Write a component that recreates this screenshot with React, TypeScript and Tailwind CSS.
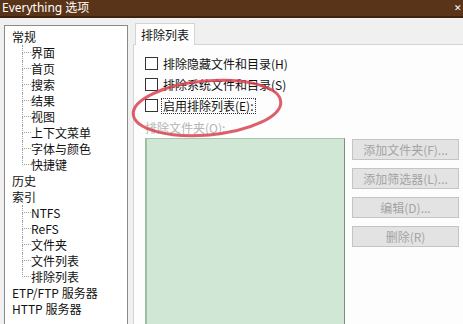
import React from "react";

type TreeItem = { label: string; child?: boolean; last?: boolean };

const tree: TreeItem[] = [
  { label: "常规" },
  { label: "界面", child: true },
  { label: "首页", child: true },
  { label: "搜索", child: true },
  { label: "结果", child: true },
  { label: "视图", child: true },
  { label: "上下文菜单", child: true },
  { label: "字体与颜色", child: true },
  { label: "快捷键", child: true, last: true },
  { label: "历史" },
  { label: "索引" },
  { label: "NTFS", child: true },
  { label: "ReFS", child: true },
  { label: "文件夹", child: true },
  { label: "文件列表", child: true },
  { label: "排除列表", child: true, last: true },
  { label: "ETP/FTP 服务器" },
  { label: "HTTP 服务器" },
];

const buttons = ["添加文件夹(F)...", "添加筛选器(L)...", "编辑(D)...", "删除(R)"];

function TreeRow({ item }: { item: TreeItem }) {
  if (!item.child) {
    return <div className="h-[16px] leading-[16px] pl-[7px] whitespace-nowrap">{item.label}</div>;
  }
  return (
    <div className="h-[16px] flex items-stretch whitespace-nowrap">
      <div className="w-[17px] shrink-0" />
      <div className="w-[9px] shrink-0 flex flex-col">
        <div className="h-[8px] border-l border-b border-dotted border-[#a0a0a0]" />
        <div className={"h-[8px] border-l border-dotted " + (item.last ? "border-transparent" : "border-[#a0a0a0]")} />
      </div>
      <span className="leading-[16px]">{item.label}</span>
    </div>
  );
}

function Check({ label, focus }: { label: string; focus?: boolean }) {
  return (
    <div className="h-[21px] flex items-center gap-[4px]">
      <div className="w-[13px] h-[13px] border border-[#333] bg-white shrink-0" />
      <span className={"leading-[14px] px-px whitespace-nowrap " + (focus ? "outline-1 outline-dotted outline-[#333]" : "")}>{label}</span>
    </div>
  );
}

export default function App() {
  return (
    <div className="relative w-[463px] h-[324px] overflow-hidden bg-[#f0f0f0] text-[12px] text-[#111] font-['Noto_Sans_CJK_SC',sans-serif] flex flex-col">
      <div className="h-[18px] shrink-0 bg-[#5a3418] border-b-2 border-[#3e220f] flex items-center justify-between pl-[2px] pr-[1px] text-white text-[12px] font-['Noto_Sans','Noto_Sans_CJK_SC',sans-serif]">
        <span className="leading-[16px]">Everything 选项</span>
        <span className="leading-[16px] text-[9px]">✕</span>
      </div>
      <div className="flex flex-1 min-h-0">
        <div className="ml-[4px] mt-[7px] w-[124px] shrink-0 h-[320px] bg-white border border-[#8a8a8a] pt-[3px]">
          {tree.map((t) => (
            <TreeRow key={t.label} item={t} />
          ))}
        </div>
        <div className="ml-[5px] mt-[4px] flex-1 flex flex-col min-w-0">
          <div className="flex h-[22px] shrink-0 items-end">
            <div className="ml-[2px] h-[22px] px-[5px] bg-white border border-b-0 border-[#d4d4d4] leading-[20px] pt-[1px] relative top-px">
              排除列表
            </div>
          </div>
          <div className="flex-1 bg-[#fdfdfd] border border-r-0 border-b-0 border-[#d4d4d4] pl-[11px] pt-[8px] flex flex-col">
            <Check label="排除隐藏文件和目录(H)" />
            <Check label="排除系统文件和目录(S)" />
            <Check label="启用排除列表(E):" focus />
            <div className="mt-[5px] h-[14px] leading-[14px] text-[#b5b5b5]">排除文件夹(O):</div>
            <div className="mt-[3px] flex flex-1 gap-[7px]">
              <div className="w-[200px] h-[200px] bg-[#d1e7d6] border-l-2 border-r border-t border-l-[#9fbea6] border-r-[#7d8d80] border-t-[#a9c2ae]" />
              <div className="flex flex-col gap-[8px] pt-px">
                {buttons.map((b) => (
                  <div
                    key={b}
                    className="w-[107px] h-[21px] bg-[#e3e3e3] border border-[#c4c4c4] text-[#a3a3a3] flex items-center justify-center whitespace-nowrap"
                  >
                    {b}
                  </div>
                ))}
              </div>
            </div>
          </div>
        </div>
      </div>
      <svg className="absolute left-0 top-0 pointer-events-none" width="463" height="324">
        <ellipse
          cx="207"
          cy="108"
          rx="74"
          ry="27"
          transform="rotate(-5 207 108)"
          fill="none"
          stroke="#d8424f"
          strokeOpacity="0.85"
          strokeWidth="3"
        />
      </svg>
    </div>
  );
}
